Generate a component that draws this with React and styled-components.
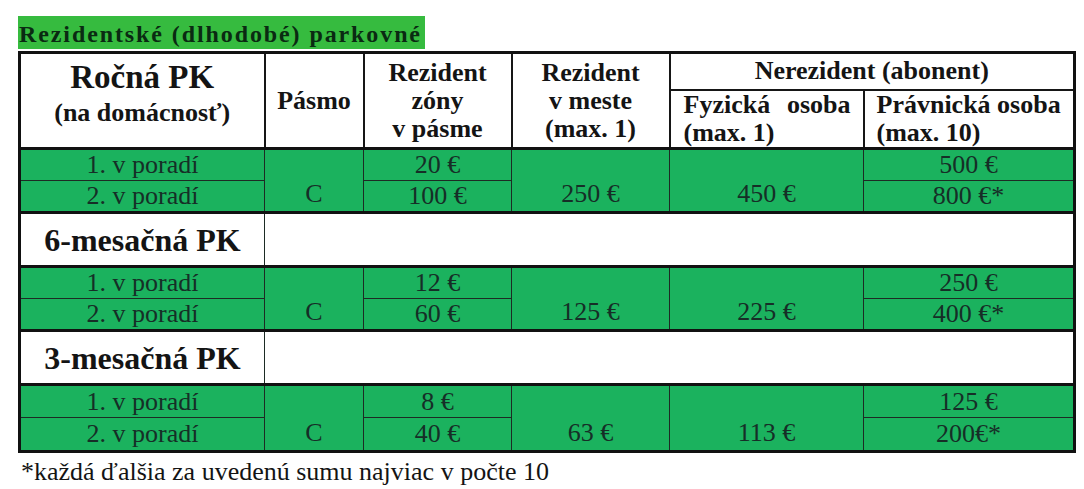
import React from "react";
import styled, { createGlobalStyle } from "styled-components";

const serif = `"Liberation Serif", "Times New Roman", Times, serif`;

const GlobalStyle = createGlobalStyle`
  body {
    margin: 0;
    background: #fff;
    font-family: ${serif};
  }
`;

const Page = styled.div`
  padding: 16px 0 0 18px;
  width: 1066px;
  font-family: ${serif};
`;

const Title = styled.div`
  display: inline-block;
  height: 33px;
  padding: 0 3px 0 1px;
  background: #36bb3f;
  color: #0a2a12;
  font-family: ${serif};
  font-weight: bold;
  font-size: 24px;
  line-height: 36px;
  letter-spacing: 1.9px;
`;

const Table = styled.table`
  width: 1055px;
  border-collapse: collapse;
  table-layout: fixed;
  border: 3px solid #111;
  margin-top: 2px;
`;

const Row = styled.tr`
  height: ${({ h }) => h}px;
`;

const Th = styled.th`
  box-sizing: border-box;
  border: 2px solid #161616;
  background: #fff;
  color: #141414;
  font-family: ${serif};
  font-size: 26px;
  font-weight: bold;
  line-height: 28px;
  padding: 0;
  white-space: nowrap;
  text-align: ${({ align }) => align || "center"};
  vertical-align: ${({ valign }) => valign || "middle"};
`;

const BigTitle = styled.div`
  font-size: 33px;
  line-height: 36px;
  padding-top: ${({ top }) => top || 0}px;
`;

const SubTitle = styled.div`
  margin-top: 4px;
`;

const SubLine = styled.div`
  display: flex;
  justify-content: ${({ spread }) => (spread ? "space-between" : "flex-start")};
  padding: 0 ${({ pr }) => pr || 4}px 0 ${({ pl }) => pl || 12}px;
`;

const Td = styled.td`
  box-sizing: border-box;
  background: #1bb25e;
  color: #162e27;
  font-family: ${serif};
  font-size: 26px;
  line-height: 26px;
  text-align: center;
  white-space: nowrap;
  vertical-align: ${({ valign }) => valign || "middle"};
  padding: ${({ pb }) => (pb ? `0 0 ${pb}px` : "0")};
  border: 1px solid #1d2b24;
  border-top: ${({ heavy }) => (heavy ? "3px solid #111" : "1px solid #1d2b24")};
`;

const SectionCell = styled.td`
  box-sizing: border-box;
  background: #fff;
  border: 1px solid #1d2b24;
  border-top: 3px solid #111;
  padding: 0;
  text-align: center;
  font-family: ${serif};
  font-size: 32px;
  line-height: 34px;
  font-weight: bold;
  color: #141414;
`;

const Note = styled.div`
  margin: 6px 0 0 3px;
  font-family: ${serif};
  font-size: 26px;
  line-height: 26px;
  color: #141414;
`;

const blocks = [
  {
    title: null,
    rows: [32, 32],
    zone: "C",
    first: "20 €",
    second: "100 €",
    city: "250 €",
    person: "450 €",
    lawFirst: "500 €",
    lawSecond: "800 €*",
  },
  {
    title: "6-mesačná PK",
    rows: [32, 32],
    zone: "C",
    first: "12 €",
    second: "60 €",
    city: "125 €",
    person: "225 €",
    lawFirst: "250 €",
    lawSecond: "400 €*",
  },
  {
    title: "3-mesačná PK",
    rows: [33, 34],
    zone: "C",
    first: "8 €",
    second: "40 €",
    city: "63 €",
    person: "113 €",
    lawFirst: "125 €",
    lawSecond: "200€*",
  },
];

const Block = ({ data }) => (
  <>
    {data.title && (
      <Row h={54}>
        <SectionCell>{data.title}</SectionCell>
        <SectionCell colSpan={5} />
      </Row>
    )}
    <Row h={data.rows[0]}>
      <Td heavy>1. v poradí</Td>
      <Td heavy rowSpan={2} valign="bottom" pb={4}>{data.zone}</Td>
      <Td heavy>{data.first}</Td>
      <Td heavy rowSpan={2} valign="bottom" pb={4}>{data.city}</Td>
      <Td heavy rowSpan={2} valign="bottom" pb={4}>{data.person}</Td>
      <Td heavy>{data.lawFirst}</Td>
    </Row>
    <Row h={data.rows[1]}>
      <Td>2. v poradí</Td>
      <Td>{data.second}</Td>
      <Td>{data.lawSecond}</Td>
    </Row>
  </>
);

export default function App() {
  return (
    <>
      <GlobalStyle />
      <Page>
        <Title>Rezidentské (dlhodobé) parkovné</Title>
        <Table>
          <colgroup>
            <col style={{ width: 245 }} />
            <col style={{ width: 99 }} />
            <col style={{ width: 148 }} />
            <col style={{ width: 158 }} />
            <col style={{ width: 194 }} />
            <col style={{ width: 211 }} />
          </colgroup>
          <thead>
            <Row h={37}>
              <Th rowSpan={2} valign="top">
                <BigTitle top={5}>Ročná PK</BigTitle>
                <SubTitle>(na domácnosť)</SubTitle>
              </Th>
              <Th rowSpan={2}>Pásmo</Th>
              <Th rowSpan={2}>
                Rezident
                <br />
                zóny
                <br />v pásme
              </Th>
              <Th rowSpan={2}>
                Rezident
                <br />v meste
                <br />
                (max. 1)
              </Th>
              <Th colSpan={2}>Nerezident (abonent)</Th>
            </Row>
            <Row h={59}>
              <Th align="left">
                <SubLine spread pl={13} pr={12}>
                  <span>Fyzická</span>
                  <span>osoba</span>
                </SubLine>
                <SubLine pl={13}>(max. 1)</SubLine>
              </Th>
              <Th align="left">
                <SubLine pl={12}>Právnická osoba</SubLine>
                <SubLine pl={12}>(max. 10)</SubLine>
              </Th>
            </Row>
          </thead>
          <tbody>
            {blocks.map((b, i) => (
              <Block key={i} data={b} />
            ))}
          </tbody>
        </Table>
        <Note>*každá ďalšia za uvedenú sumu najviac v počte 10</Note>
      </Page>
    </>
  );
}
